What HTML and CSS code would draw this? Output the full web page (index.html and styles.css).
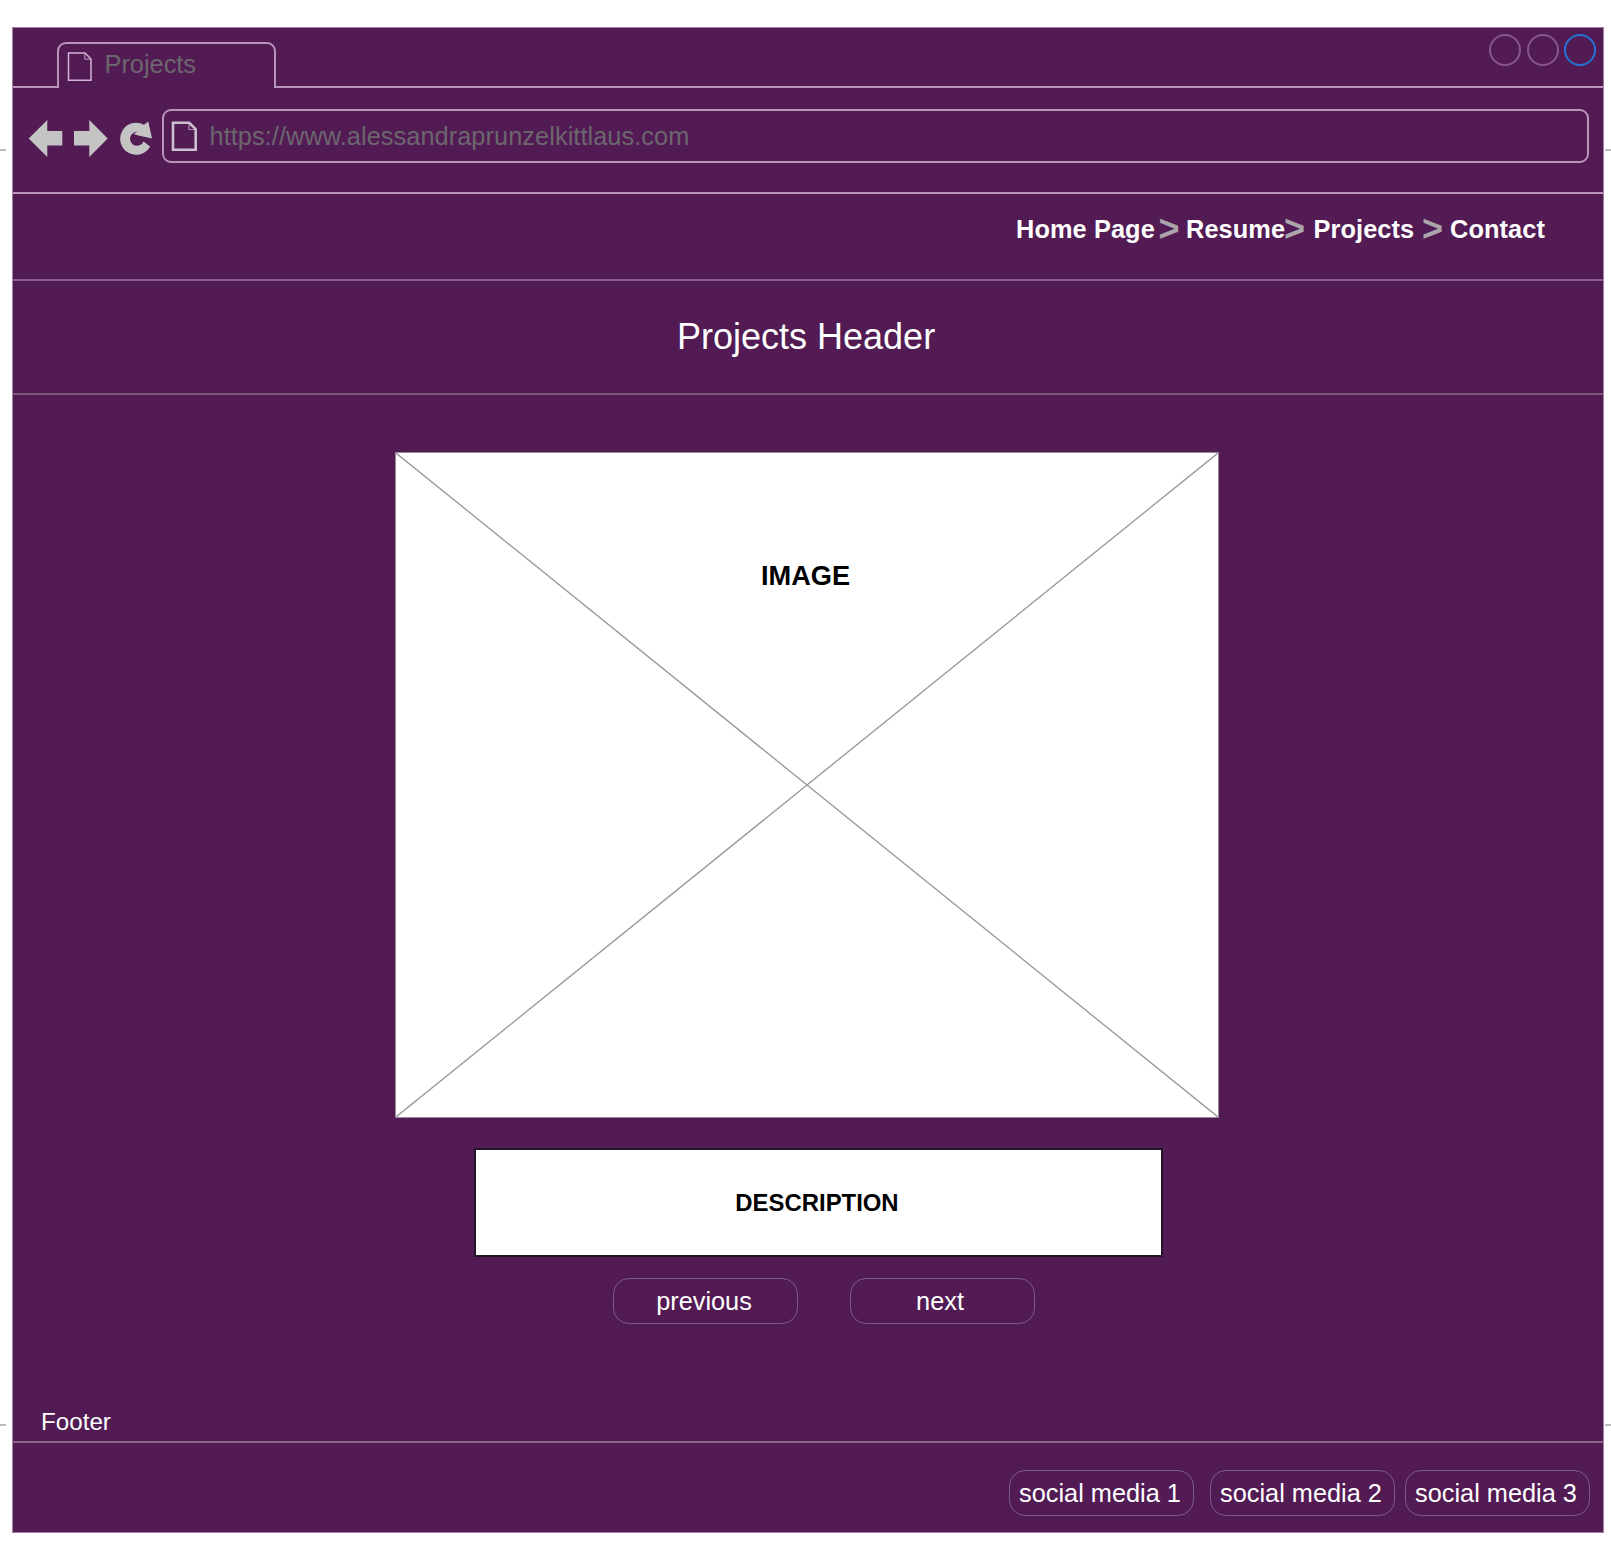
FILE: index.html
```html
<!DOCTYPE html>
<html lang="en">
<head>
<meta charset="utf-8">
<title>Projects</title>
<link rel="stylesheet" href="styles.css">
</head>
<body>
<i class="guide guide-tl"></i><i class="guide guide-tr"></i><i class="guide guide-bl"></i><i class="guide guide-br"></i>
<div class="window">
  <div class="tabs">
    <div class="strip-start"></div>
    <div class="tab">
      <svg class="tab-page" width="26" height="30" viewBox="0 0 26 30" fill="none" stroke="#d2b4d5" stroke-width="1.5"><path d="M1.500 1H18L24 7V28.300H1.500Z"/><path d="M17.800 1.500V7.200H24" stroke-width="1.200" opacity=".7"/></svg>
      <span>Projects</span>
    </div>
    <div class="strip-end">
      <i class="dot"></i><i class="dot"></i><i class="dot dot-blue"></i>
    </div>
  </div>
  <div class="toolbar">
    <svg class="controls" width="128" height="40" viewBox="0 0 128 40" fill="#c4c4c4">
      <path d="M.7 19.500L19.300 1V12H34.300V26.500H19.300V38Z"/>
      <path d="M79.700 19.500L61.300 1V12H46V26.500H61.300V38Z"/>
      <path d="M116 5.800A16 16 0 1 0 122.200 27.500L115.500 22.500A7 7 0 1 1 109.500 12.800L105.300 14.800L109.500 16.300L124 19.500L120.300 2.600Z"/>
    </svg>
    <div class="address">
      <svg width="27" height="31" viewBox="0 0 27 31" fill="none" stroke="#cdbfcf" stroke-width="2.600"><path d="M2 1.800H18.300L24.700 8.200V28.800H2Z"/><path d="M18 2V8.500H24.600" stroke-width="1.200" opacity=".7"/></svg>
      <span>https://www.alessandraprunzelkittlaus.com</span>
    </div>
  </div>
  <nav class="nav"><a class="home">Home Page</a><b>&gt;</b><a class="resume">Resume</a><b>&gt;</b><a class="projects">Projects</a><b>&gt;</b><a class="contact">Contact</a></nav>
  <header class="header"><h1>Projects Header</h1></header>
  <main class="main">
    <div class="image">
      <svg class="cross" viewBox="0 0 823 665" preserveAspectRatio="none"><path d="M0 0L823 665M823 0L0 665" stroke="#9c9c9c" stroke-width="1.400"/></svg>
      <strong>IMAGE</strong>
    </div>
    <div class="description">DESCRIPTION</div>
    <div class="pager"><span class="button">previous</span><span class="button next">next</span></div>
  </main>
  <div class="footer-label">Footer</div>
  <footer class="social"><span class="button">social media 1</span><span class="button second">social media 2</span><span class="button">social media 3</span></footer>
</div>
</body>
</html>
```
FILE: styles.css
```css
* { box-sizing: border-box; }
body {
  margin: 0;
  padding: 27px 0 0 12px;
  height: 1553px;
  position: relative;
  overflow: hidden;
  background: #fff;
  color: #fff;
  font: 25.33px/30px "Liberation Sans", Arial, sans-serif;
  white-space: nowrap;
}
.guide { position: absolute; height: 2px; width: 6px; background: #bdbdbd; }
.guide-tl { left: 0; top: 149px; }
.guide-tr { right: 0; top: 149px; }
.guide-bl { left: 0; top: 1424px; }
.guide-br { right: 0; top: 1424px; }
.window {
  position: relative;
  display: flex;
  flex-direction: column;
  width: 1592px;
  height: 1506px;
  background: #521b54;
  border: 1px solid #a283a6;
}
.tabs { display: flex; height: 60px; }
.strip-start { width: 44px; border-bottom: 2px solid #b795ba; }
.tab {
  width: 219px;
  height: 46px;
  margin-top: 14px;
  padding: 8px 0 0 8px;
  display: flex;
  border: 2px solid #b795ba;
  border-bottom: 0;
  border-radius: 9px 9px 0 0;
  color: #6c666e;
}
.tab span { margin-left: 11.500px; margin-top: -3px; }
.strip-end {
  flex: 1;
  display: flex;
  justify-content: flex-end;
  gap: 5.500px;
  padding: 6px 7px 0 0;
  border-bottom: 2px solid #b795ba;
}
.dot { width: 32px; height: 32px; border: 2px solid #875590; border-radius: 50%; }
.dot-blue { border-color: #2673d3; }
.toolbar { display: flex; height: 106px; padding: 21px 14px 0 15px; border-bottom: 2px solid #b795ba; }
.controls { margin-top: 10px; }
.address {
  flex: 1;
  height: 54px;
  margin-left: 6px;
  padding: 10px 0 0 7px;
  display: flex;
  border: 2px solid #b795ba;
  border-radius: 9px;
  color: #6c666e;
  letter-spacing: 0.065px;
}
.address span { margin: 0 0 0 11.500px; }
.nav {
  display: flex;
  justify-content: flex-end;
  height: 87px;
  padding: 20px 58px 0 0;
  border-bottom: 2px solid #876089;
  font-weight: bold;
  letter-spacing: 0.1px;
}
.nav b { width: 22px; color: #aaa5ab; font-size: 36px; }
.home { width: 142.500px; }
.resume { width: 98px; margin-left: 5.500px; }
.projects { width: 101.500px; margin: 0 7px 0 7.500px; }
.contact { margin-left: 6px; }
.header { height: 114px; border-bottom: 2px solid #785a7b; }
.header h1 { margin: 36px 0 0 664px; font-size: 36px; font-weight: normal; line-height: 40px; }
.main { height: 1011px; }
.image {
  position: relative;
  width: 824px;
  height: 666px;
  margin: 57px 0 0 382px;
  padding-top: 107px;
  background: #fff;
  border: 1px solid #9c869e;
  color: #000;
  font-size: 27.200px;
  text-align: center;
}
.image strong { margin-right: 3px; line-height: 32px; }
.cross { position: absolute; inset: 0; width: 100%; height: 100%; }
.description {
  width: 689px;
  height: 109px;
  margin: 30px 0 0 461px;
  padding-right: 3px;
  background: #fff;
  border: 2px solid #231427;
  color: #000;
  font-size: 23.900px;
  font-weight: bold;
  line-height: 105px;
  text-align: center;
}
.pager { display: flex; gap: 52px; margin: 21px 0 0 600px; }
.button {
  width: 185px;
  height: 46px;
  padding-right: 3px;
  border: 1px solid #7d5c80;
  border-radius: 16px;
  line-height: 44px;
  text-align: center;
}
.next { padding-right: 5px; }
.footer-label { height: 35px; padding-left: 28px; font-size: 24.200px; line-height: 31px; }
.social {
  display: flex;
  justify-content: flex-end;
  padding: 27px 13px 0 0;
  border-top: 2px solid #856787;
}
.social .second { margin: 0 10px 0 16px; }
```
